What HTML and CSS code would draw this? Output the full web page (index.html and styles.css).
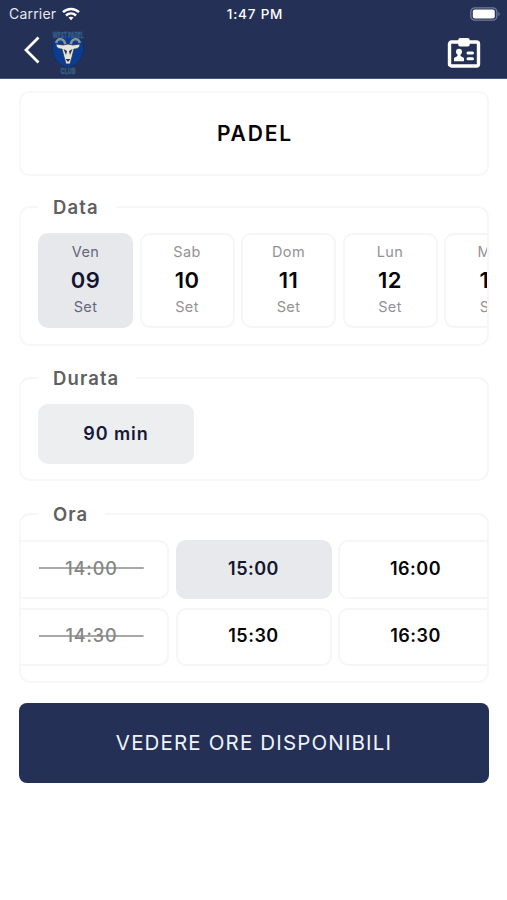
FILE: index.html
```html
<!DOCTYPE html>
<html lang="it">
<head>
<meta charset="utf-8">
<title>Padel</title>
<link rel="stylesheet" href="styles.css">
</head>
<body>
<header class="top">
  <div class="status">
    <div class="carrier"><span class="carrier-name">Carrier</span>
      <svg width="18" height="14" viewBox="0 0 18 14" fill="none" stroke="#fff" stroke-width="2.5"><path d="M1 5.2C5.5.9 12.500.9 17 5.200"/><path d="M4 8.500c2.900-2.800 7.100-2.800 10 0"/><path d="M6.500 10.600c1.500-1.300 3.500-1.300 5 0L9 13.300z" fill="#fff" stroke="none"/></svg>
    </div>
    <div class="clock"><span>1:47 PM</span></div>
    <svg class="battery" width="31" height="14" viewBox="0 0 31 14"><rect x=".8" y=".8" width="26" height="12.400" rx="4" fill="none" stroke="#747b98" stroke-width="1.300"/><rect x="2.800" y="2.500" width="22" height="9" rx="2" fill="#fff"/><path d="M28.500 4.500q2 2.500 0 5z" fill="#858ba5"/></svg>
  </div>
  <nav class="nav">
    <svg class="back" width="18" height="28" viewBox="0 0 18 28" fill="none" stroke="#fff" stroke-width="2.800"><path d="M15.500 1.500 3 14l12.500 12.500"/></svg>
    <svg class="crest" width="36" height="48" viewBox="0 0 36 48">
      <path d="M3 13C0 27 6 36 18 40c12-4 18-13 15-27-8-8-22-8-30 0z" fill="#0b3c91" stroke="#173052" stroke-width="1"/>
      <text class="crest-text" x="18" y="10" text-anchor="middle" textLength="31" lengthAdjust="spacingAndGlyphs">WEST PADEL</text>
      <path d="M15.500 18C15 10 8 9 6 15M20.500 18C21 10 28 9 30 15" fill="none" stroke="#8c9295" stroke-width="2.400"/>
      <path d="M13 17l-7-1c0 3 2 5 6 5l2 8 2 7h4l2-7 2-8c4 0 6-2 6-5l-7 1-5-1z" fill="#e5e5df" stroke="#26364f" stroke-width=".8"/>
      <path d="M13.500 21l3.500 2-1 4zM22.500 21L19 23l1 4zM15.500 31h5L18 34z" fill="#273344"/>
      <text class="crest-text" x="18" y="46" text-anchor="middle" textLength="15" lengthAdjust="spacingAndGlyphs">CLUB</text>
    </svg>
    <svg class="badge" width="34" height="32" viewBox="0 0 34 32"><rect x="2.500" y="5" width="29" height="24" rx="2" fill="none" stroke="#fff" stroke-width="3.400"/><rect x="11.200" y="1" width="11.500" height="8.500" rx="2" fill="#fff"/><circle cx="12" cy="14.800" r="3" fill="#fff"/><path d="M10.500 16h3v3l3.500 2v3.300H7V21l3.500-2z" fill="#fff"/><path d="M21 16h4.500M21 21.800h4.500" stroke="#fff" stroke-width="3" stroke-linecap="round"/></svg>
  </nav>
</header>
<main class="content">
  <div class="sport"><span>PADEL</span></div>
  <section class="group group-date">
    <h2><span>Data</span></h2>
    <div class="strip days">
      <div class="day selected"><span>Ven</span><b>09</b><span>Set</span></div>
      <div class="day"><span>Sab</span><b>10</b><span>Set</span></div>
      <div class="day"><span>Dom</span><b>11</b><span>Set</span></div>
      <div class="day"><span>Lun</span><b>12</b><span>Set</span></div>
      <div class="day"><span>Mar</span><b>13</b><span>Set</span></div>
    </div>
  </section>
  <section class="group group-duration">
    <h2><span>Durata</span></h2>
    <div class="strip"><div class="duration"><span>90 min</span></div></div>
  </section>
  <section class="group group-time">
    <h2><span>Ora</span></h2>
    <div class="strip times">
      <div class="slot off"><span>14:00</span></div>
      <div class="slot selected"><span>15:00</span></div>
      <div class="slot"><span>16:00</span></div>
      <div class="slot off"><span>14:30</span></div>
      <div class="slot"><span>15:30</span></div>
      <div class="slot"><span>16:30</span></div>
    </div>
  </section>
  <button class="submit"><span>VEDERE ORE DISPONIBILI</span></button>
</main>
</body>
</html>
```
FILE: styles.css
```css
* { box-sizing: border-box; }
body { margin: 0; height: 900px; overflow: hidden; background: #fff; font-family: Inter, "Liberation Sans", sans-serif; color: #060608; }
svg { display: block; flex: none; }
.top { height: 79px; background: #243056; border-bottom: 1px solid #44577a; color: #fff; }
.status { height: 27px; display: grid; grid-template-columns: 1fr auto 1fr; align-items: center; padding: 0 6px 0 9px; }
.carrier { display: flex; align-items: center; gap: 6px; font-size: 14px; letter-spacing: .2px; color: #e4e7ef; }
.clock { font-size: 13.500px; font-weight: 500; letter-spacing: .8px; }
.battery { justify-self: end; }
.nav { height: 51px; display: flex; align-items: center; padding: 0 26px 0 23px; }
.back { margin-bottom: 5px; }
.crest { margin: 0 0 2px 9px; overflow: visible; }
.crest-text { font-size: 8px; font-weight: 800; fill: #2d5683; stroke: #416a8f; stroke-width: .3px; }
.badge { margin-left: auto; }
.content { padding: 12px 18px 0 19px; }
.sport { height: 85px; border: 2px solid #f7f7f8; border-radius: 10px; display: flex; align-items: center; justify-content: center; font-size: 21px; font-weight: 600; letter-spacing: 1.800px; }
.sport span { margin: -1px -1.800px 0 0; }
.group { border: 2px solid #f7f7f8; border-radius: 11px; }
.group h2 { margin: -13px 0 0 17px; height: 24px; width: max-content; padding: 0 17px 0 15px; background: #fff; font-size: 18.500px; line-height: 24px; font-weight: 600; letter-spacing: 1.100px; color: #606060; }
.group-date { height: 140px; margin-top: 30px; }
.group-duration { height: 104px; margin-top: 31px; }
.group-time { height: 170px; margin-top: 32px; }
.strip { overflow: hidden; padding-top: 14px; }
.days { display: flex; gap: 6.500px; padding-left: 17px; }
.day { flex: 0 0 95px; height: 95px; border: 2px solid #f6f6f7; border-radius: 10px; display: flex; flex-direction: column; align-items: center; padding-top: 7px; color: #929294; font-size: 14.500px; line-height: 20px; letter-spacing: .4px; }
.day b { font-size: 22px; line-height: 30px; margin: 3px 0 2px; font-weight: 600; color: #060608; }
.day.selected { background: #e7e8ec; border-color: #e7e8ec; color: #646778; }
.day.selected b { color: #12152d; }
.duration { width: 156px; height: 60px; margin-left: 17px; padding-bottom: 2px; border-radius: 10px; background: #eceeef; display: flex; align-items: center; justify-content: center; font-size: 18px; font-weight: 600; letter-spacing: .9px; color: #17193a; }
.times { display: grid; grid-template-columns: 148px 156px 162px; column-gap: 6.500px; row-gap: 9px; }
.slot { height: 58.500px; border: 2px solid #f6f6f7; border-radius: 10px; padding-bottom: 2px; display: flex; align-items: center; justify-content: center; font-size: 18px; font-weight: 600; letter-spacing: .5px; }
.slot:nth-child(3n+1) { border-left: 0; border-radius: 0 10px 10px 0; padding-right: 5px; }
.slot:nth-child(3n) { padding-right: 7px; }
.slot.selected { background: #e7e9ed; border-color: #e7e9ed; color: #14172b; }
.off { color: #858585; font-weight: 500; letter-spacing: .9px; }
.off span { padding: 0 26px; background: linear-gradient(#a8a8a8, #a8a8a8) center / 100% 2px no-repeat; }
.submit { display: flex; align-items: center; justify-content: center; width: 100%; height: 80px; margin-top: 20px; padding: 0 0 2px; border: 0; border-radius: 8px; background: #243056; color: #f0f3fa; font: 400 20.500px Inter, sans-serif; letter-spacing: 1.150px; }
```
